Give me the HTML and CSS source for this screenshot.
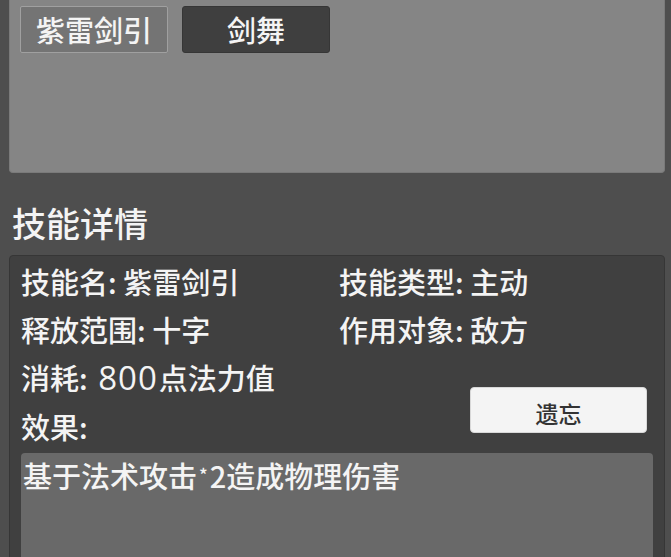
FILE: index.html
```html
<!DOCTYPE html>
<html lang="zh-CN">
<head>
  <meta charset="UTF-8">
  <meta name="viewport" content="width=device-width, initial-scale=1.0">
  <title>技能详情</title>
  <link rel="stylesheet" href="styles.css">
</head>
<body>
  <div class="skill-list">
    <button class="skill-tab active">紫雷剑引</button>
    <button class="skill-tab">剑舞</button>
  </div>

  <h2 class="section-title">技能详情</h2>

  <div class="detail">
    <div class="detail-grid">
      <div class="field">技能名: 紫雷剑引</div>
      <div class="field">技能类型: 主动</div>
      <div class="field">释放范围: 十字</div>
      <div class="field">作用对象: 敌方</div>
      <div class="field">消耗: <span class="num">800</span>点法力值</div>
      <div class="forget-cell"><button class="forget-btn">遗忘</button></div>
      <div class="field">效果:</div>
    </div>
    <div class="effect">基于法术攻击<span class="star">*</span>2造成物理伤害</div>
  </div>
</body>
</html>
```

FILE: styles.css
```css
body { margin: 0; padding: 0 6px 0 9px; background: #4e4e4e; color: #f4f4f4; font-family: "Noto Sans CJK SC", "Noto Sans", sans-serif; font-weight: 500; overflow: hidden; }
.skill-list { height: 166px; padding: 6px 10px 0 10px; background: #858585; border: 1px solid #7a7a7a; border-top: none; border-radius: 0 0 4px 4px; display: flex; align-items: flex-start; gap: 14px; }
.skill-tab { width: 148px; height: 47px; padding: 0; font: inherit; font-size: 29px; line-height: 1; color: #f4f4f4; background: #3f3f3f; border: 1px solid #363636; border-radius: 3px; }
.skill-tab.active { background: #747474; border-color: #a0a0a0; border-radius: 2px; }
.section-title { margin: 26px 0 8px 3px; font-size: 34px; line-height: 48px; font-weight: 500; }
.detail { background: #404040; border: 1px solid #363636; border-radius: 4px; padding: 1px 11px 0 11px; height: 320px; }
.detail-grid { display: grid; grid-template-columns: 318px 1fr; font-size: 29px; line-height: 48px; }
.field { white-space: nowrap; }
.num { font-family: "Open Sans", sans-serif; font-size: 33px; letter-spacing: 1px; padding-left: 4px; padding-right: 1px; }
.forget-cell { grid-row: span 2; display: flex; align-items: center; justify-content: flex-end; padding: 16px 6px 0 0; }
.forget-btn { width: 177px; height: 46px; font: inherit; font-size: 23px; font-weight: 500; color: #333; background: #f4f4f4; border: 1px solid #d8d8d8; border-radius: 4px; }
.effect { margin: 3px 0 0 0; padding: 0 2px; height: 140px; background: #696969; border-radius: 4px; font-size: 29px; line-height: 42px; }
.star { font-size: 18px; vertical-align: 6px; padding: 0 2px; }
```
